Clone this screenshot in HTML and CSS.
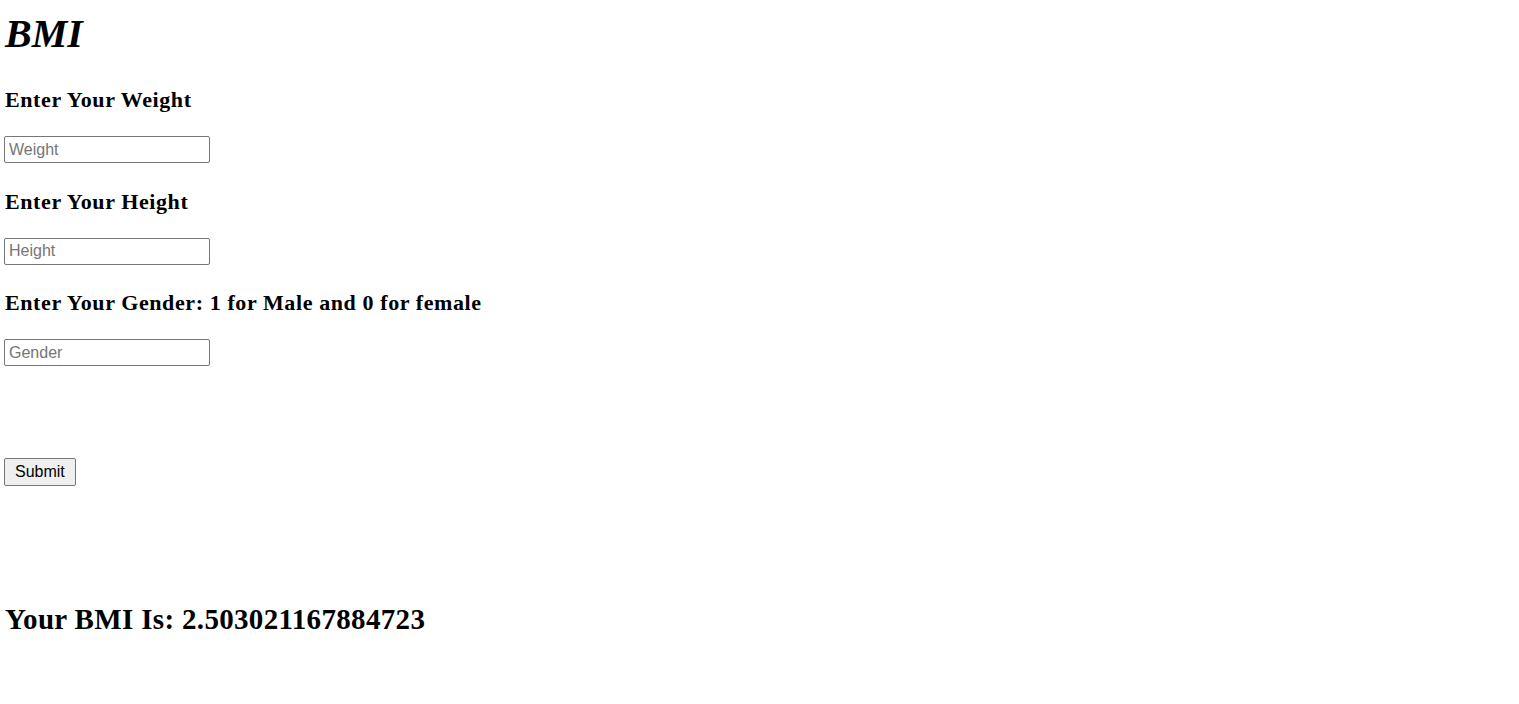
FILE: index.html
```html
<!DOCTYPE html>
<html lang="en">
<head>
<meta charset="utf-8">
<title>BMI</title>
<link rel="stylesheet" href="styles.css">
</head>
<body>
<h1 class="title">BMI</h1>
<form class="bmi-form">
  <h3 class="label">Enter Your Weight</h3>
  <input class="field" type="text" placeholder="Weight">
  <h3 class="label">Enter Your Height</h3>
  <input class="field" type="text" placeholder="Height">
  <h3 class="label">Enter Your Gender: 1 for Male and 0 for female</h3>
  <input class="field" type="text" placeholder="Gender">
  <button class="submit" type="button">Submit</button>
</form>
<h2 class="result">Your BMI Is: 2.503021167884723</h2>
</body>
</html>
```
FILE: styles.css
```css
html, body {
  background: #ffffff;
}
body {
  margin: 0;
  padding: 0 4px;
  font-family: "Liberation Serif", "Times New Roman", serif;
  color: #000000;
}
.title {
  margin: 11px 0 0 1px;
  font-size: 40px;
  line-height: 46px;
  font-style: italic;
  font-weight: bold;
}
.bmi-form {
  display: flex;
  flex-direction: column;
  align-items: flex-start;
}
.label {
  margin: 31px 0 0 1px;
  font-size: 22px;
  line-height: 24px;
  letter-spacing: 0.6px;
  font-weight: bold;
}
.label + .field {
  margin-top: 24px;
}
.field + .label {
  margin-top: 26.5px;
}
.field {
  box-sizing: border-box;
  width: 206px;
  height: 27px;
  margin: 0;
  padding: 1px 4px;
  border: 1px solid #767676;
  border-radius: 2px;
  font-family: "Liberation Sans", Arial, sans-serif;
  font-size: 16px;
  color: #000000;
  background: #ffffff;
  outline: none;
}
.field::placeholder {
  color: #757575;
}
.submit {
  box-sizing: border-box;
  margin-top: 92px;
  height: 28px;
  padding: 0 10px;
  border: 1px solid #767676;
  border-radius: 2px;
  background: #efefef;
  font-family: "Liberation Sans", Arial, sans-serif;
  font-size: 16px;
  color: #000000;
}
.result {
  margin: 116px 0 0 1px;
  font-size: 29px;
  line-height: 34px;
  letter-spacing: 0.33px;
  font-weight: bold;
}
```
